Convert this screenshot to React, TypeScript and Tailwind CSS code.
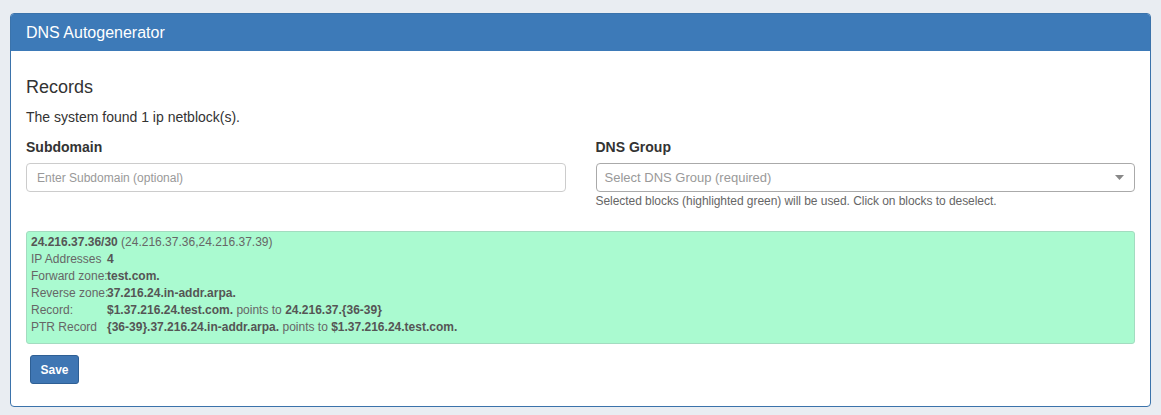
import React from 'react';

const rows: { label: string; value: React.ReactNode }[] = [
  { label: 'IP Addresses', value: <b>4</b> },
  { label: 'Forward zone:', value: <b>test.com.</b> },
  { label: 'Reverse zone:', value: <b>37.216.24.in-addr.arpa.</b> },
  {
    label: 'Record:',
    value: (
      <>
        <b>$1.37.216.24.test.com.</b> points to <b>24.216.37.{'{'}36-39{'}'}</b>
      </>
    ),
  },
  {
    label: 'PTR Record',
    value: (
      <>
        <b>{'{'}36-39{'}'}.37.216.24.in-addr.arpa.</b> points to <b>$1.37.216.24.test.com.</b>
      </>
    ),
  },
];

export default function App() {
  return (
    <div className="min-h-[415px] bg-[#e9edf2] pt-[13px] px-[10px] pb-[7px] font-['Liberation_Sans',Arial,sans-serif] text-[#333]">
      <div className="border border-[#3b73ab] rounded-[4px] bg-white overflow-hidden">
        {/* header */}
        <div className="h-[37px] bg-[#3d7ab8] px-[15px] flex items-center text-white text-[16px]">
          DNS Autogenerator
        </div>

        <div className="px-[15px] pt-[26px] pb-[22px]">
          <h3 className="text-[18px] leading-[20px] text-[#333]">Records</h3>
          <p className="mt-[10px] text-[14px] leading-[20px]">The system found 1 ip netblock(s).</p>

          <div className="mt-[10px] grid grid-cols-2 gap-x-[30px]">
            <div>
              <label className="block text-[14px] leading-[20px] font-bold">Subdomain</label>
              <input
                className="mt-[6px] w-full h-[29px] border border-[#ccc] rounded-[4px] px-[10px] text-[12px] text-[#555] placeholder:text-[#999] outline-none"
                placeholder="Enter Subdomain (optional)"
              />
            </div>
            <div>
              <label className="block text-[14px] leading-[20px] font-bold">DNS Group</label>
              <div className="mt-[6px] h-[29px] border border-[#aaa] rounded-[4px] pl-[8px] pr-[10px] flex items-center justify-between text-[13px] text-[#999]">
                <span>Select DNS Group (required)</span>
                <svg width="9" height="5" viewBox="0 0 9 5">
                  <path d="M0 0h9L4.5 5z" fill="#888" />
                </svg>
              </div>
              <div className="mt-[1px] text-[12px] leading-[16px] text-[#666] tracking-[-0.05px]">
                Selected blocks (highlighted green) will be used. Click on blocks to deselect.
              </div>
            </div>
          </div>

          {/* netblock */}
          <div className="mt-[22px] bg-[#aafad0] border border-[#a3dcc0] rounded-[3px] pl-[4px] pt-[2px] pb-[7px] text-[12px] leading-[17px] text-[#666]">
            <div>
              <b className="text-[#555]">24.216.37.36/30</b> (24.216.37.36,24.216.37.39)
            </div>
            {rows.map((r) => (
              <div key={r.label} className="grid grid-cols-[76px_1fr] whitespace-nowrap">
                <span>{r.label}</span>
                <span className="[&_b]:text-[#555]">{r.value}</span>
              </div>
            ))}
          </div>

          <button className="mt-[11px] ml-[4px] h-[29px] w-[49px] rounded-[3px] bg-[#3f76b3] border border-[#2e5f94] text-white text-[12px] font-bold">
            Save
          </button>
        </div>
      </div>
    </div>
  );
}
